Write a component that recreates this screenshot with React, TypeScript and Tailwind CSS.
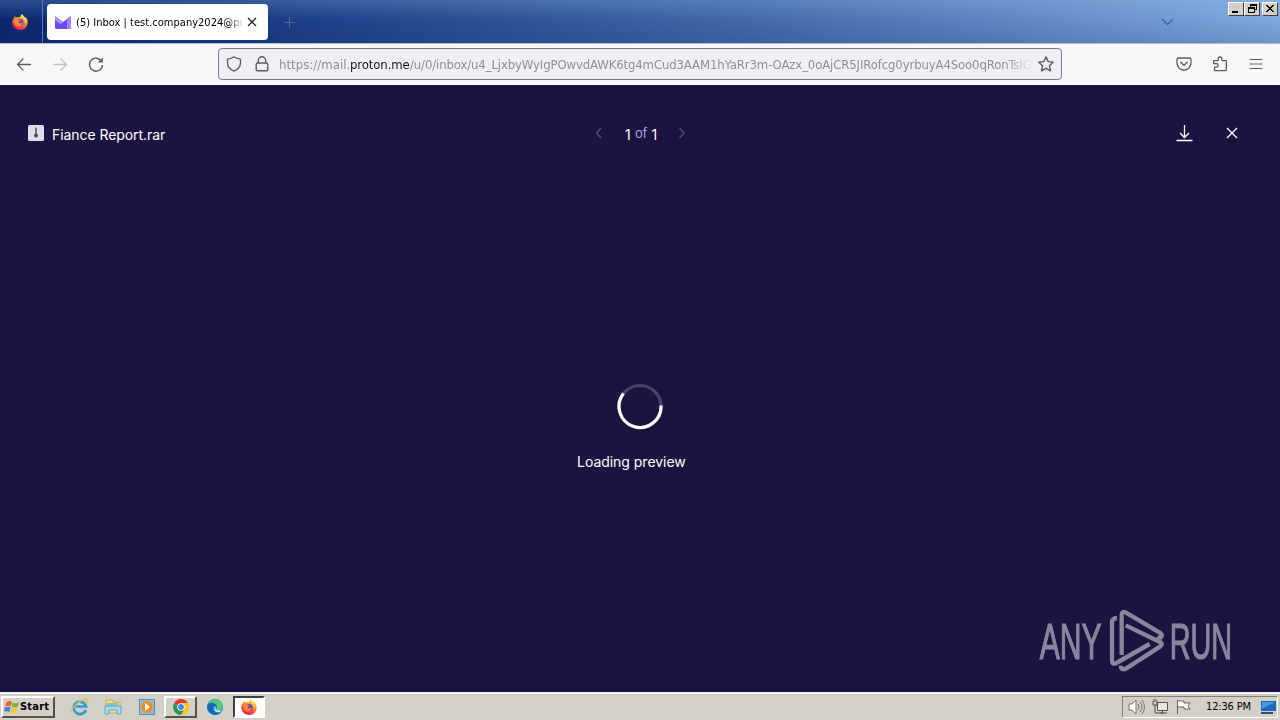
import React from "react";

const ui = "font-['DejaVu_Sans_Condensed','DejaVu_Sans',sans-serif] [font-stretch:condensed]";

function Firefox({ id }: { id: string }) {
  return (
    <svg width="16" height="16" viewBox="0 0 16 16" className="block shrink-0">
      <defs>
        <linearGradient id={id} x1="0.8" y1="0" x2="0.3" y2="1">
          <stop offset="0" stopColor="#fff36b" />
          <stop offset="0.35" stopColor="#ffa12c" />
          <stop offset="0.7" stopColor="#ff4b3a" />
          <stop offset="1" stopColor="#e7156b" />
        </linearGradient>
      </defs>
      <path d="M1.7 4.5 2.8 2l1 1.6C5.500 2.800 7 3 8 3.600 8 2.200 9 .7 10.300 0c.2 1.500 1.500 2.300 2.700 3.400l.6-.3C15 4.500 15.700 6.500 15.700 8.400 15.700 12.700 12.300 16 8 16S.3 12.600.3 8.300c0-1.600.5-2.800 1.400-3.800Z" fill={`url(#${id})`} />
      <circle cx="8" cy="8.600" r="3.600" fill="#6b42d6" />
      <path d="M2 6.200c1.600-1.500 3.300-1.300 4.700-.5l1.800.2C8 7 6.700 7 6.500 7.800c.3 1.600 2.600 2.200 4 .8 0 3-2.200 4.200-4.300 3.800C3.500 12 2 9.500 2 6.200Z" fill="#ff8a22" />
      <path d="M10.300 0c.2 1.500 1.600 2.400 2.700 3.800 1.200 1.500 1.300 4.200.4 5.700.1-2.500-.8-4.400-2.600-5.300C9.700 3.200 9.600 1.300 10.300 0Z" fill="#ffe15a" />
    </svg>
  );
}

function IconPath({ d, size = 16, color = "#5b5b66", width = 1.3 }: { d: string; size?: number; color?: string; width?: number }) {
  return (
    <svg width={size} height={size} viewBox="0 0 16 16" fill="none" stroke={color} strokeWidth={width} strokeLinecap="round" strokeLinejoin="round" className="block shrink-0">
      <path d={d} />
    </svg>
  );
}

function WindowButton({ children }: { children: React.ReactNode }) {
  return (
    <div className="h-[14px] w-4 border border-t-white border-l-white border-r-[#404040] border-b-[#404040] bg-[#d4d0c8]">
      <svg width="14" height="12" viewBox="0 0 14 12" fill="none" stroke="#000" shapeRendering="crispEdges">{children}</svg>
    </div>
  );
}

function TabBar() {
  return (
    <header className="flex h-[43px] bg-[linear-gradient(180deg,rgba(160,205,245,0.22),transparent_45%,rgba(20,40,100,0.16)),linear-gradient(90deg,#0b2770_0%,#12317d_12%,#274c92_34%,#4269aa_58%,#6288c4_80%,#7ea9de_100%)]">
      <div className="flex w-[43px] items-center border-r border-[#5973ad] pl-3"><Firefox id="fxTab" /></div>
      <div className={`mt-1 ml-1 flex h-9 w-[221px] items-center rounded-[4px] bg-white pl-2 ${ui}`}>
        <svg width="16" height="13" viewBox="0 0 16 13" className="shrink-0">
          <path d="M0 0 8 6 16 0v11.500a1.500 1.500 0 0 1-1.500 1.500h-13A1.500 1.500 0 0 1 0 11.500Z" fill="#6d4aff" />
          <path d="m0 0 8 6-2.500 2.300L0 4Z" fill="#aa95ff" />
          <path d="M12 3 16 0v11.500a1.500 1.500 0 0 1-1.500 1.500H12Z" fill="#9d83ff" />
        </svg>
        <div className="ml-[5px] w-[168px] pt-[3px] text-[11px] tracking-[0.02px] whitespace-nowrap text-black [mask-image:linear-gradient(90deg,#000_90%,transparent)]">(5) Inbox | test.company2024@pr</div>
        <svg width="10" height="10" viewBox="0 0 10 10" className="ml-[3px] shrink-0" stroke="#222" strokeWidth="1.300"><path d="m1 1 8 8M9 1 1 9" /></svg>
      </div>
      <svg width="12" height="12" viewBox="0 0 12 12" className="mt-[17px] ml-4" stroke="#58658d"><path d="M5.500 0v11M0 5.500h11" /></svg>
      <svg width="13" height="8" viewBox="0 0 13 8" className="mt-[18px] ml-auto" fill="none" stroke="#48628f" strokeWidth="1.400"><path d="m1 1 5.500 5.500L12 1" /></svg>
      <div className="mt-[2px] mr-[2px] ml-[54px] flex">
        <WindowButton><path d="M3 9h6M3 8h6" /></WindowButton>
        <WindowButton><path d="M5 2h6M5 1.500h6v5H9M5 2v3M3 5h6M3 4.500h6v5H3z" /></WindowButton>
        <div className="ml-[2px]"><WindowButton><path d="m3 2 7 7M4 2l7 7M10 2 3 9M11 2 4 9" shapeRendering="auto" /></WindowButton></div>
      </div>
    </header>
  );
}

function Toolbar() {
  return (
    <div className="flex h-[42px] items-center border-t border-b border-t-[#b5bac9] border-b-white bg-[#f8f8fb] pl-4">
      <IconPath d="M14.500 8.500h-13M7 3 1.500 8.500 7 14" />
      <div className="ml-5"><IconPath d="M1.500 8.500h13M9 3 14.500 8.500 9 14" color="#c1c1c8" /></div>
      <div className="ml-5">
        <svg width="16" height="16" viewBox="0 0 16 16" fill="none" stroke="#5b5b66" strokeWidth="1.400"><path d="M13.700 5.500A6.500 6.500 0 1 0 14.500 9" /><path d="M14.800 1.500v5h-5z" fill="#5b5b66" stroke="none" /></svg>
      </div>
      <div className="ml-[114px] flex h-8 w-[844px] items-center rounded-[4px] border border-[#77777f] bg-[#f0f0f4] pl-[7px]">
        <IconPath d="M8 .8c2 1.500 4 2 6.500 2.400v3.600c0 3.600-2.500 6.700-6.500 8.400-4-1.700-6.500-4.800-6.500-8.400V3.200C4 2.800 6 2.300 8 .8Z" />
        <div className="ml-3"><IconPath d="M3.500 7h9a1.300 1.300 0 0 1 1.300 1.300v5.200a1.300 1.300 0 0 1-1.300 1.300h-9a1.300 1.300 0 0 1-1.300-1.300V8.300A1.300 1.300 0 0 1 3.500 7ZM4.300 7V4.500a3.700 3.700 0 0 1 7.400 0V7" width={1.400} /></div>
        <div className={`ml-[9px] flex w-[753px] pt-[2px] text-[13px] whitespace-nowrap text-[#8e8e96] [mask-image:linear-gradient(90deg,#000_96.500%,transparent)] ${ui}`}>
          <span className="w-[71px] shrink-0 tracking-[0.05px]">https://mail.</span>
          <span className="w-[60px] shrink-0 tracking-[-0.1px] text-[#15141a]">proton.me</span>
          <span className="tracking-[-0.12px]">/u/0/inbox/u4_LjxbyWyIgPOwvdAWK6tg4mCud3AAM1hYaRr3m-OAzx_0oAjCR5JIRofcg0yrbuyA4Soo0qRonTsIG</span>
        </div>
        <div className="ml-[6px]"><IconPath d="m8 .9 2.200 4.700 5 .6-3.700 3.500 1 5.100L8 12.300l-4.500 2.500 1-5.100L.8 6.200l5-.6Z" width={1.400} /></div>
      </div>
      <div className="ml-[114px]"><IconPath d="M2.500 2h11A1.500 1.500 0 0 1 15 3.500V7A7 7 0 0 1 1 7V3.500A1.500 1.500 0 0 1 2.500 2ZM4.500 6 8 9.300 11.500 6" /></div>
      <div className="ml-5"><IconPath d="M2.500 14.700V11.200h1.800a1.800 1.800 0 0 0 0-3.600H1.700V4.600h4.500V2.800a1.800 1.800 0 0 1 3.600 0v1.800h3.700a.8.8 0 0 1 .8.8v8.500a.8.8 0 0 1-.8.8Z" /></div>
      <div className="ml-5"><IconPath d="M2 3.500h12M2 8h12M2 12.500h12" width={1.200} /></div>
    </div>
  );
}

function Watermark() {
  return (
    <svg width="240" height="80" viewBox="0 0 720 240" className="absolute right-5 bottom-3 overflow-visible" fill="none" opacity="0.52">
      <g fill="#f0edf5" stroke="#f0edf5" strokeWidth="3.500" fontSize="152" fontFamily="'Liberation Sans Narrow','Liberation Sans',sans-serif">
        <text x="59" y="176" textLength="186" lengthAdjust="spacingAndGlyphs">ANY</text>
        <text x="449" y="176" textLength="187" lengthAdjust="spacingAndGlyphs">RUN</text>
      </g>
      <g stroke="#f0edf5" strokeWidth="13" strokeLinejoin="round">
        <path d="M291 55c-10-1-15 4-15 12v115c0 9 5 11 13 7l100-57" />
        <path d="M305 165V45c0-9 5-12 13-7l101 60c12 8 4 20-8 13" />
        <path d="m317 76 103 50c7 4 7 9 0 14L319 205c-9 6-17 3-16-8" />
      </g>
    </svg>
  );
}

function Preview() {
  return (
    <main className="relative flex h-[607px] flex-col bg-[#1b1340] font-[Inter,sans-serif] text-[14px] text-white">
      <div className="flex h-[96px] items-center pr-[42px] pl-7">
        <div className="flex w-[566px] items-center">
          <svg width="16" height="16" viewBox="0 0 16 16"><rect width="16" height="16" rx="1.500" fill="#deddea" /><path d="M7 3h1M8 5h1M7 7h1M8 3v7" stroke="#34313d" /><circle cx="8" cy="10.500" r="2" fill="#4b4853" /></svg>
          <span className="ml-2 pt-[2px] tracking-[-0.07px]">Fiance Report.rar</span>
        </div>
        <svg width="8" height="12" viewBox="0 0 8 12" fill="none" stroke="#575078" strokeWidth="1.300"><path d="M7 1 2.500 6 7 11" /></svg>
        <div className="ml-[23px] flex w-[32px] justify-between pt-[2px] tracking-[-0.3px]"><span>1</span><span className="text-[13px] text-[#aaa0df]">of</span><span>1</span></div>
        <svg width="8" height="12" viewBox="0 0 8 12" className="ml-[21px]" fill="none" stroke="#575078" strokeWidth="1.300"><path d="m1.500 1 4.500 5-4.500 5" /></svg>
        <svg width="18" height="18" viewBox="0 0 18 18" className="ml-auto" fill="none" stroke="#fff" strokeWidth="1.300"><path d="M9.500 1v12M5 9l4.500 4.500L14 9M1.500 16.500h16" /></svg>
        <svg width="12" height="12" viewBox="0 0 12 12" className="ml-[33px]" stroke="#fff" strokeWidth="1.300"><path d="m1 1 10 10M11 1 1 11" /></svg>
      </div>
      <div className="mt-[201px] flex justify-center">
        <svg width="48" height="48" viewBox="0 0 48 48" fill="none" strokeWidth="3.200"><circle cx="24" cy="24.500" r="21" stroke="#4a4268" /><path d="M45 23.500A21 21 0 1 1 7.500 11.500" stroke="#fff" /></svg>
      </div>
      <div className="mt-[22px] ml-[577px] leading-5 tracking-[-0.03px]">Loading preview</div>
      <Watermark />
    </main>
  );
}

function Taskbar() {
  return (
    <footer className={`flex h-7 items-center border-t border-[#eeeae0] bg-[#d4d0c8] shadow-[inset_0_1px_#fff] ${ui}`}>
      <div className="ml-px flex h-[22px] w-[54px] items-center border-2 border-t-white border-l-white border-r-[#55534e] border-b-[#55534e]">
        <svg width="16" height="16" viewBox="0 0 16 16" className="ml-px shrink-0"><path d="M2.500 3C5 1.500 6.500 2 8 3L6.800 7.500C5 6.500 3.400 6.500 1.300 7.500Z" fill="#ef652b" /><path d="M8.800 3.500c2 1 3.900.9 6.200-.3l-1.300 4.500c-2.100 1-4 1-6-.1Z" fill="#83b532" /><path d="M1 8.500c2-1 3.700-1 5.500 0L5.300 13C3.500 12-.1 12-.1 13Z" fill="#3a84d6" /><path d="M7.300 9c2 1 3.900.9 6 0l-1.300 4.500c-2 1-4 1-6 0Z" fill="#f5c335" /></svg>
        <span className="pt-[2px] text-[11px] font-bold tracking-[0.2px] text-black">Start</span>
      </div>
      <svg width="18" height="18" viewBox="0 0 18 18" className="ml-4" fill="none"><path d="M14.800 12A6.200 6.200 0 1 1 15 8.500H5" stroke="#329fdb" strokeWidth="2.700" /><path d="M1 15C-1 11 8 2 15 1c4 0 1 4 0 5" stroke="#e5bd42" strokeWidth="1.300" /></svg>
      <svg width="18" height="16" viewBox="0 0 18 16" className="ml-[15px]"><path d="M2 1h6l1 2h7v11H2z" fill="#f5dd8a" stroke="#c8ad54" /><path d="M3 4h11v3H3z" fill="#8cc3b4" /><path d="M1 7h16v8h-4v-4H5v4H1z" fill="#a9d9ef" stroke="#60a8c7" /></svg>
      <svg width="16" height="16" viewBox="0 0 16 16" className="ml-[17px]"><rect x=".5" y=".5" width="15" height="15" fill="#8dbee2" stroke="#4e91bf" /><circle cx="8" cy="8" r="6" fill="#f58b20" /><path d="m6 4 5 4-5 4Z" fill="#fff" /></svg>
      <div className="ml-[9px] flex h-[22px] w-[33px] items-center justify-center border-2 border-t-white border-l-white border-r-[#55534e] border-b-[#55534e]">
        <svg width="16" height="16" viewBox="0 0 16 16"><path d="M8 8 1.100 4A8 8 0 0 1 15 4Z" fill="#e33b2e" /><path d="M8 8 1.100 4A8 8 0 0 0 8 16l4-6Z" fill="#279b4b" /><path d="M8 4h7a8 8 0 0 1-7 12l4-7Z" fill="#fbc51b" /><circle cx="8" cy="8" r="3.800" fill="#fff" /><circle cx="8" cy="8" r="2.900" fill="#4285e9" /></svg>
      </div>
      <svg width="16" height="16" viewBox="0 0 16 16" className="ml-[10px]"><circle cx="8" cy="8" r="8" fill="#178bcb" /><path d="M1 4.500C4-1 13-.8 15.500 5c1 4-1 6-4.500 6-2-.2-2-1-1-2C11 5 5 2 1 4.500Z" fill="#5acb75" /><path d="M0 8c1-5 8-5 9-1-4 0-5 5 1 7 2 .4 3 0 4-1-3 5-13 3-14-5Z" fill="#1267b4" /><path d="M8 7c1 1 0 1.700.5 3 1.500 1.500 4 2 6 .5L13 13C9 14 6 11 8 7Z" fill="#d6e9ea" /></svg>
      <div className="ml-[10px] flex h-[22px] w-[32px] items-center justify-center border-2 border-t-[#404040] border-l-[#404040] border-r-white border-b-white bg-white"><Firefox id="fxTask" /></div>
      <div className="mr-[2px] ml-auto flex h-[22px] w-[156px] items-center border border-t-[#808080] border-l-[#808080] border-r-white border-b-white pl-[5px]">
        <svg width="18" height="16" viewBox="0 0 18 16" fill="#fff" stroke="#77756f"><path d="M1 5h3l4-4v14l-4-4H1Z" /><path d="M10 5q2 3 0 6M12 3q4 5 0 10M14 1q5 7 0 14" fill="none" /></svg>
        <svg width="17" height="16" viewBox="0 0 17 16" className="ml-[6px]" fill="none" stroke="#55534e"><path d="M5.500 3.500h10v8h-10z" fill="#e8e6e1" /><path d="M1 2v4h4V2M2 0v3M4 0v3M3 6v8h9M8 14h7M10.500 12v2" /></svg>
        <svg width="16" height="16" viewBox="0 0 16 16" className="ml-[7px]" fill="#fff" stroke="#66645f"><path d="M1.500 1v14M2 2h6v2h6l-2 3 2 3H8V8H2" /></svg>
        <span className="ml-[14px] w-[48px] pt-[2px] text-[11px] whitespace-nowrap tracking-[-0.15px] text-black">12:36 PM</span>
        <svg width="16" height="14" viewBox="0 0 16 14" className="ml-[6px]"><path d="M1 1h15v10H1z" fill="#1f69bd" /><path d="M2 2h13L2 9z" fill="#4698dd" /><path d="M1 12h12v2H1z" fill="#304d78" /></svg>
      </div>
    </footer>
  );
}

export default function App() {
  return <div className="h-[720px] w-[1280px] overflow-hidden"><TabBar /><Toolbar /><Preview /><Taskbar /></div>;
}
